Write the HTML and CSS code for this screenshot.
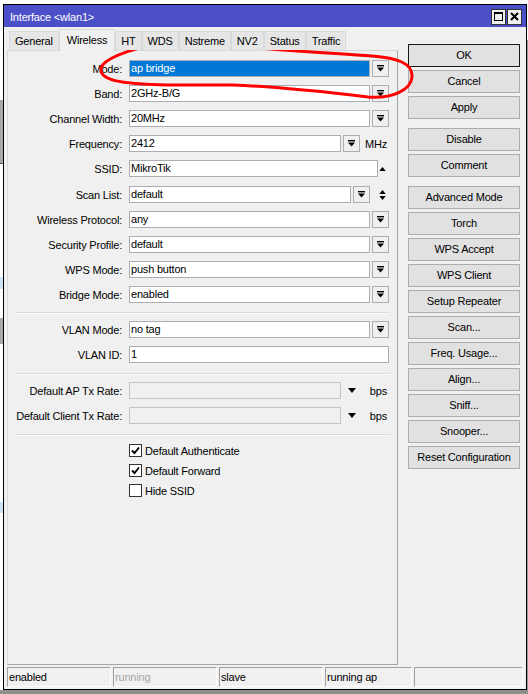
FILE: index.html
```html
<!DOCTYPE html>
<html lang="en">
<head>
    <meta charset="UTF-8">
    <title>Interface &lt;wlan1&gt;</title>
    <link rel="stylesheet" href="styles.css">
</head>
<body>
    <svg class="defs" width="0" height="0">
        <symbol id="dd-icon" viewBox="0 0 7 7">
            <rect x="0" y="0" width="7" height="1.4"/>
            <polygon points="0,2.6 7,2.6 3.5,6.6"/>
        </symbol>
        <symbol id="tri-up" viewBox="0 0 8 5">
            <polygon points="0,5 8,5 4,0"/>
        </symbol>
        <symbol id="tri-down" viewBox="0 0 8 5">
            <polygon points="0,0 8,0 4,5"/>
        </symbol>
        <symbol id="check" viewBox="0 0 11 11">
            <polyline points="2,5.5 4.5,8 9,2.5" fill="none" stroke="#000" stroke-width="1.9"/>
        </symbol>
    </svg>

    <div class="window">
        <div class="titlebar">
            <span class="title">Interface &lt;wlan1&gt;</span>
            <div class="title-btns">
                <span class="tbtn">
                    <svg width="9" height="9" viewBox="0 0 9 9"><rect x="0.5" y="0.5" width="8" height="8" fill="none" stroke="#000"/><rect x="0" y="0" width="9" height="2"/></svg>
                </span>
                <span class="tbtn">
                    <svg width="9" height="9" viewBox="0 0 9 9"><path d="M1 1 L8 8 M8 1 L1 8" stroke="#000" stroke-width="2"/></svg>
                </span>
            </div>
        </div>

        <div class="window-body">
            <div class="main">
                <div class="left">
                    <div class="tabs">
                        <span class="tab">General</span>
                        <span class="tab active">Wireless</span>
                        <span class="tab">HT</span>
                        <span class="tab">WDS</span>
                        <span class="tab">Nstreme</span>
                        <span class="tab">NV2</span>
                        <span class="tab">Status</span>
                        <span class="tab">Traffic</span>
                    </div>
                    <div class="panel">
                        <div class="row">
                            <label>Mode:</label>
                            <div class="ctrl">
                                <div class="field selected">ap bridge</div>
                                <span class="dd"><svg><use href="#dd-icon"/></svg></span>
                            </div>
                        </div>
                        <div class="row">
                            <label>Band:</label>
                            <div class="ctrl">
                                <div class="field">2GHz-B/G</div>
                                <span class="dd"><svg><use href="#dd-icon"/></svg></span>
                            </div>
                        </div>
                        <div class="row">
                            <label>Channel Width:</label>
                            <div class="ctrl">
                                <div class="field">20MHz</div>
                                <span class="dd"><svg><use href="#dd-icon"/></svg></span>
                            </div>
                        </div>
                        <div class="row">
                            <label>Frequency:</label>
                            <div class="ctrl">
                                <div class="field">2412</div>
                                <span class="dd"><svg><use href="#dd-icon"/></svg></span>
                                <span class="suffix">MHz</span>
                            </div>
                        </div>
                        <div class="row wide">
                            <label>SSID:</label>
                            <div class="ctrl">
                                <div class="field">MikroTik</div>
                                <span class="suffix narrow"><svg class="tri"><use href="#tri-up"/></svg></span>
                            </div>
                        </div>
                        <div class="row">
                            <label>Scan List:</label>
                            <div class="ctrl">
                                <div class="field">default</div>
                                <span class="dd"><svg><use href="#dd-icon"/></svg></span>
                                <span class="suffix updown">
                                    <svg class="tri"><use href="#tri-up"/></svg>
                                    <svg class="tri"><use href="#tri-down"/></svg>
                                </span>
                            </div>
                        </div>
                        <div class="row">
                            <label>Wireless Protocol:</label>
                            <div class="ctrl">
                                <div class="field">any</div>
                                <span class="dd"><svg><use href="#dd-icon"/></svg></span>
                            </div>
                        </div>
                        <div class="row">
                            <label>Security Profile:</label>
                            <div class="ctrl">
                                <div class="field">default</div>
                                <span class="dd"><svg><use href="#dd-icon"/></svg></span>
                            </div>
                        </div>
                        <div class="row">
                            <label>WPS Mode:</label>
                            <div class="ctrl">
                                <div class="field">push button</div>
                                <span class="dd"><svg><use href="#dd-icon"/></svg></span>
                            </div>
                        </div>
                        <div class="row">
                            <label>Bridge Mode:</label>
                            <div class="ctrl">
                                <div class="field">enabled</div>
                                <span class="dd"><svg><use href="#dd-icon"/></svg></span>
                            </div>
                        </div>

                        <div class="sep first"></div>

                        <div class="row">
                            <label>VLAN Mode:</label>
                            <div class="ctrl">
                                <div class="field">no tag</div>
                                <span class="dd"><svg><use href="#dd-icon"/></svg></span>
                            </div>
                        </div>
                        <div class="row">
                            <label>VLAN ID:</label>
                            <div class="ctrl">
                                <div class="field">1</div>
                            </div>
                        </div>

                        <div class="sep"></div>

                        <div class="row">
                            <label>Default AP Tx Rate:</label>
                            <div class="ctrl">
                                <div class="field disabled"></div>
                                <span class="dd flat"><svg class="tri big"><use href="#tri-down"/></svg></span>
                                <span class="suffix">bps</span>
                            </div>
                        </div>
                        <div class="row">
                            <label>Default Client Tx Rate:</label>
                            <div class="ctrl">
                                <div class="field disabled"></div>
                                <span class="dd flat"><svg class="tri big"><use href="#tri-down"/></svg></span>
                                <span class="suffix">bps</span>
                            </div>
                        </div>

                        <div class="sep"></div>

                        <div class="checks">
                            <div class="check"><span class="box"><svg><use href="#check"/></svg></span>Default Authenticate</div>
                            <div class="check"><span class="box"><svg><use href="#check"/></svg></span>Default Forward</div>
                            <div class="check"><span class="box"></span>Hide SSID</div>
                        </div>
                    </div>
                </div>

                <div class="buttons">
                    <span class="btn default">OK</span>
                    <span class="btn">Cancel</span>
                    <span class="btn">Apply</span>
                    <span class="btn spaced">Disable</span>
                    <span class="btn">Comment</span>
                    <span class="btn spaced">Advanced Mode</span>
                    <span class="btn">Torch</span>
                    <span class="btn">WPS Accept</span>
                    <span class="btn">WPS Client</span>
                    <span class="btn">Setup Repeater</span>
                    <span class="btn">Scan...</span>
                    <span class="btn">Freq. Usage...</span>
                    <span class="btn">Align...</span>
                    <span class="btn">Sniff...</span>
                    <span class="btn">Snooper...</span>
                    <span class="btn">Reset Configuration</span>
                </div>
            </div>

            <div class="statusbar">
                <span class="cell">enabled</span>
                <span class="cell muted">running</span>
                <span class="cell">slave</span>
                <span class="cell short">running ap</span>
                <span class="cell last"></span>
            </div>
        </div>
    </div>

    <!-- red marker scribbled around the Mode row -->
    <svg class="scribble" width="528" height="694" viewBox="0 0 528 694">
        <path d="M167 41 C140 47, 104 57, 101 68 C99 80, 118 84, 168 85 L233 85 C285 87, 335 93, 368 97 C392 99, 411 90, 412 77 C413 63, 397 58, 372 56 C330 53, 285 51, 240 46 C210 43, 186 40, 166 42"
              fill="none" stroke="#ff0000" stroke-width="3" stroke-linecap="round" stroke-linejoin="round"/>
    </svg>
</body>
</html>
```

FILE: styles.css
```css
* {
    margin: 0;
    padding: 0;
    box-sizing: border-box;
}

body {
    width: 528px;
    height: 694px;
    overflow: hidden;
    position: relative;
    padding: 4px 0 0 3px;
    font-family: "Liberation Sans", Arial, sans-serif;
    font-size: 11px;
    letter-spacing: -0.2px;
    color: #000;
    background:
        linear-gradient(#8f8f8f, #8f8f8f) left bottom / 100% 4px no-repeat,
        linear-gradient(to bottom,
            #fff 0, #fff 100px, #a9a9a9 100px, #a9a9a9 163px, #555 163px, #555 164px,
            #fff 164px, #fff 277px, #cde3f7 277px, #cde3f7 289px, #fff 289px,
            #fff 318px, #a9a9a9 318px, #a9a9a9 344px, #fff 344px, #fff 502px,
            #cde3f7 502px, #cde3f7 513px, #fff 513px) left top / 3px 100% no-repeat,
        linear-gradient(#fff, #fff) right top / 2px 40px no-repeat,
        linear-gradient(#9a9a9a, #9a9a9a) right top / 2px 100% no-repeat,
        #fff;
}

.defs {
    position: absolute;
}

.window {
    width: 524px;
    height: 686px;
    border: 1px solid #000;
    background-color: #f0f0f0;
    display: flex;
    flex-direction: column;
}

.titlebar {
    height: 22px;
    background-color: #4c50c8;
    color: #fff;
    display: flex;
    align-items: center;
    justify-content: space-between;
    padding: 1px 4px 0 6px;
}

.title-btns {
    display: flex;
    gap: 1px;
}

.tbtn {
    width: 15px;
    height: 16px;
    border: 1px solid #333;
    background-color: #f0f0f0;
    display: flex;
    align-items: center;
    justify-content: center;
}

.window-body {
    flex: 1;
    padding: 2px 3px 2px 3px;
    display: flex;
    flex-direction: column;
}

.main {
    flex: 1;
    display: flex;
}

.left {
    width: 391px;
    display: flex;
    flex-direction: column;
}

/* tabs */
.tabs {
    height: 21px;
    padding-left: 2px;
    display: flex;
    align-items: flex-end;
    position: relative;
    z-index: 1;
}

.tab {
    height: 19px;
    line-height: 18px;
    padding: 0 5px;
    border: 1px solid #d9d9d9;
    border-bottom: none;
    background-color: #e6e6e6;
}

.tab.active {
    height: 22px;
    line-height: 20px;
    margin-bottom: -1px;
    padding: 0 7px;
    background-color: #f0f0f0;
    border-color: #d9d9d9;
}

.panel {
    flex: 1;
    display: flex;
    flex-direction: column;
    border: 1px solid #d9d9d9;
    border-right-color: #a6a6a6;
    border-bottom-color: #a6a6a6;
    padding-top: 9px;
}

/* form rows */
.row {
    display: flex;
    align-items: center;
    height: 17px;
    margin-bottom: 8px;
}

.row.wide {
    margin-bottom: 9px;
}

.row label {
    width: 114px;
    margin-right: 7px;
    text-align: right;
    white-space: nowrap;
}

.ctrl {
    width: 260px;
    height: 17px;
    display: flex;
    align-items: center;
}

.field {
    flex: 1;
    height: 17px;
    line-height: 15px;
    padding-left: 1px;
    border: 1px solid #abadb3;
    background-color: #fff;
    white-space: nowrap;
    overflow: hidden;
}

.field.selected {
    background-color: #0078d7;
    color: #fff;
}

.field.disabled {
    background-color: #f0f0f0;
    border-color: #c4c4c4;
}

.dd {
    width: 17px;
    height: 17px;
    margin-left: 2px;
    border: 1px solid #adadad;
    background-color: #f0f0f0;
    display: flex;
    align-items: center;
    justify-content: center;
}

.dd svg {
    width: 7px;
    height: 7px;
}

.dd.flat {
    border-color: transparent;
    background: none;
}

.suffix {
    width: 29px;
    padding-right: 2px;
    text-align: right;
    display: flex;
    justify-content: flex-end;
    align-items: center;
}

.suffix.narrow {
    width: 11px;
    padding-right: 3px;
}

.suffix.updown {
    width: 19px;
    padding-right: 3px;
    flex-direction: column;
    align-items: flex-end;
    gap: 2px;
}

.tri {
    width: 7px;
    height: 4px;
    display: block;
}

.dd .tri.big {
    width: 8px;
    height: 5px;
}

.sep {
    height: 2px;
    margin: 2px 7px 7px 8px;
    border-top: 1px solid #dadada;
    border-bottom: 1px solid #fbfbfb;
}

.sep.first {
    margin-top: 1px;
}

/* checkboxes */
.checks {
    padding-top: 1px;
}

.check {
    display: flex;
    align-items: center;
    height: 13px;
    margin-bottom: 7px;
    padding-left: 121px;
}

.box {
    width: 13px;
    height: 13px;
    margin-right: 3px;
    border: 1px solid #333;
    background-color: #fff;
}

.box svg {
    width: 11px;
    height: 11px;
    display: block;
}

/* right-hand buttons */
.buttons {
    width: 112px;
    margin-left: 10px;
    padding-top: 15px;
    display: flex;
    flex-direction: column;
}

.btn {
    height: 23px;
    margin-bottom: 3px;
    border: 1px solid #adadad;
    background-color: #e1e1e1;
    text-align: center;
    line-height: 21px;
    white-space: nowrap;
}

.btn.default {
    border-color: #1a1a1a;
}

.btn.spaced {
    margin-top: 6px;
}

/* status bar */
.statusbar {
    height: 20px;
    margin-top: 2px;
    display: flex;
    gap: 2px;
}

.cell {
    width: 104px;
    line-height: 18px;
    padding-left: 1px;
    border: 1px solid;
    border-color: #a0a0a0 #fff #fff #a0a0a0;
    white-space: nowrap;
}

.cell.short {
    width: 87px;
}

.cell.last {
    flex: 1;
}

.cell.muted {
    color: #a8a8a8;
}

.scribble {
    position: absolute;
    top: 0;
    left: 0;
    pointer-events: none;
}
```
